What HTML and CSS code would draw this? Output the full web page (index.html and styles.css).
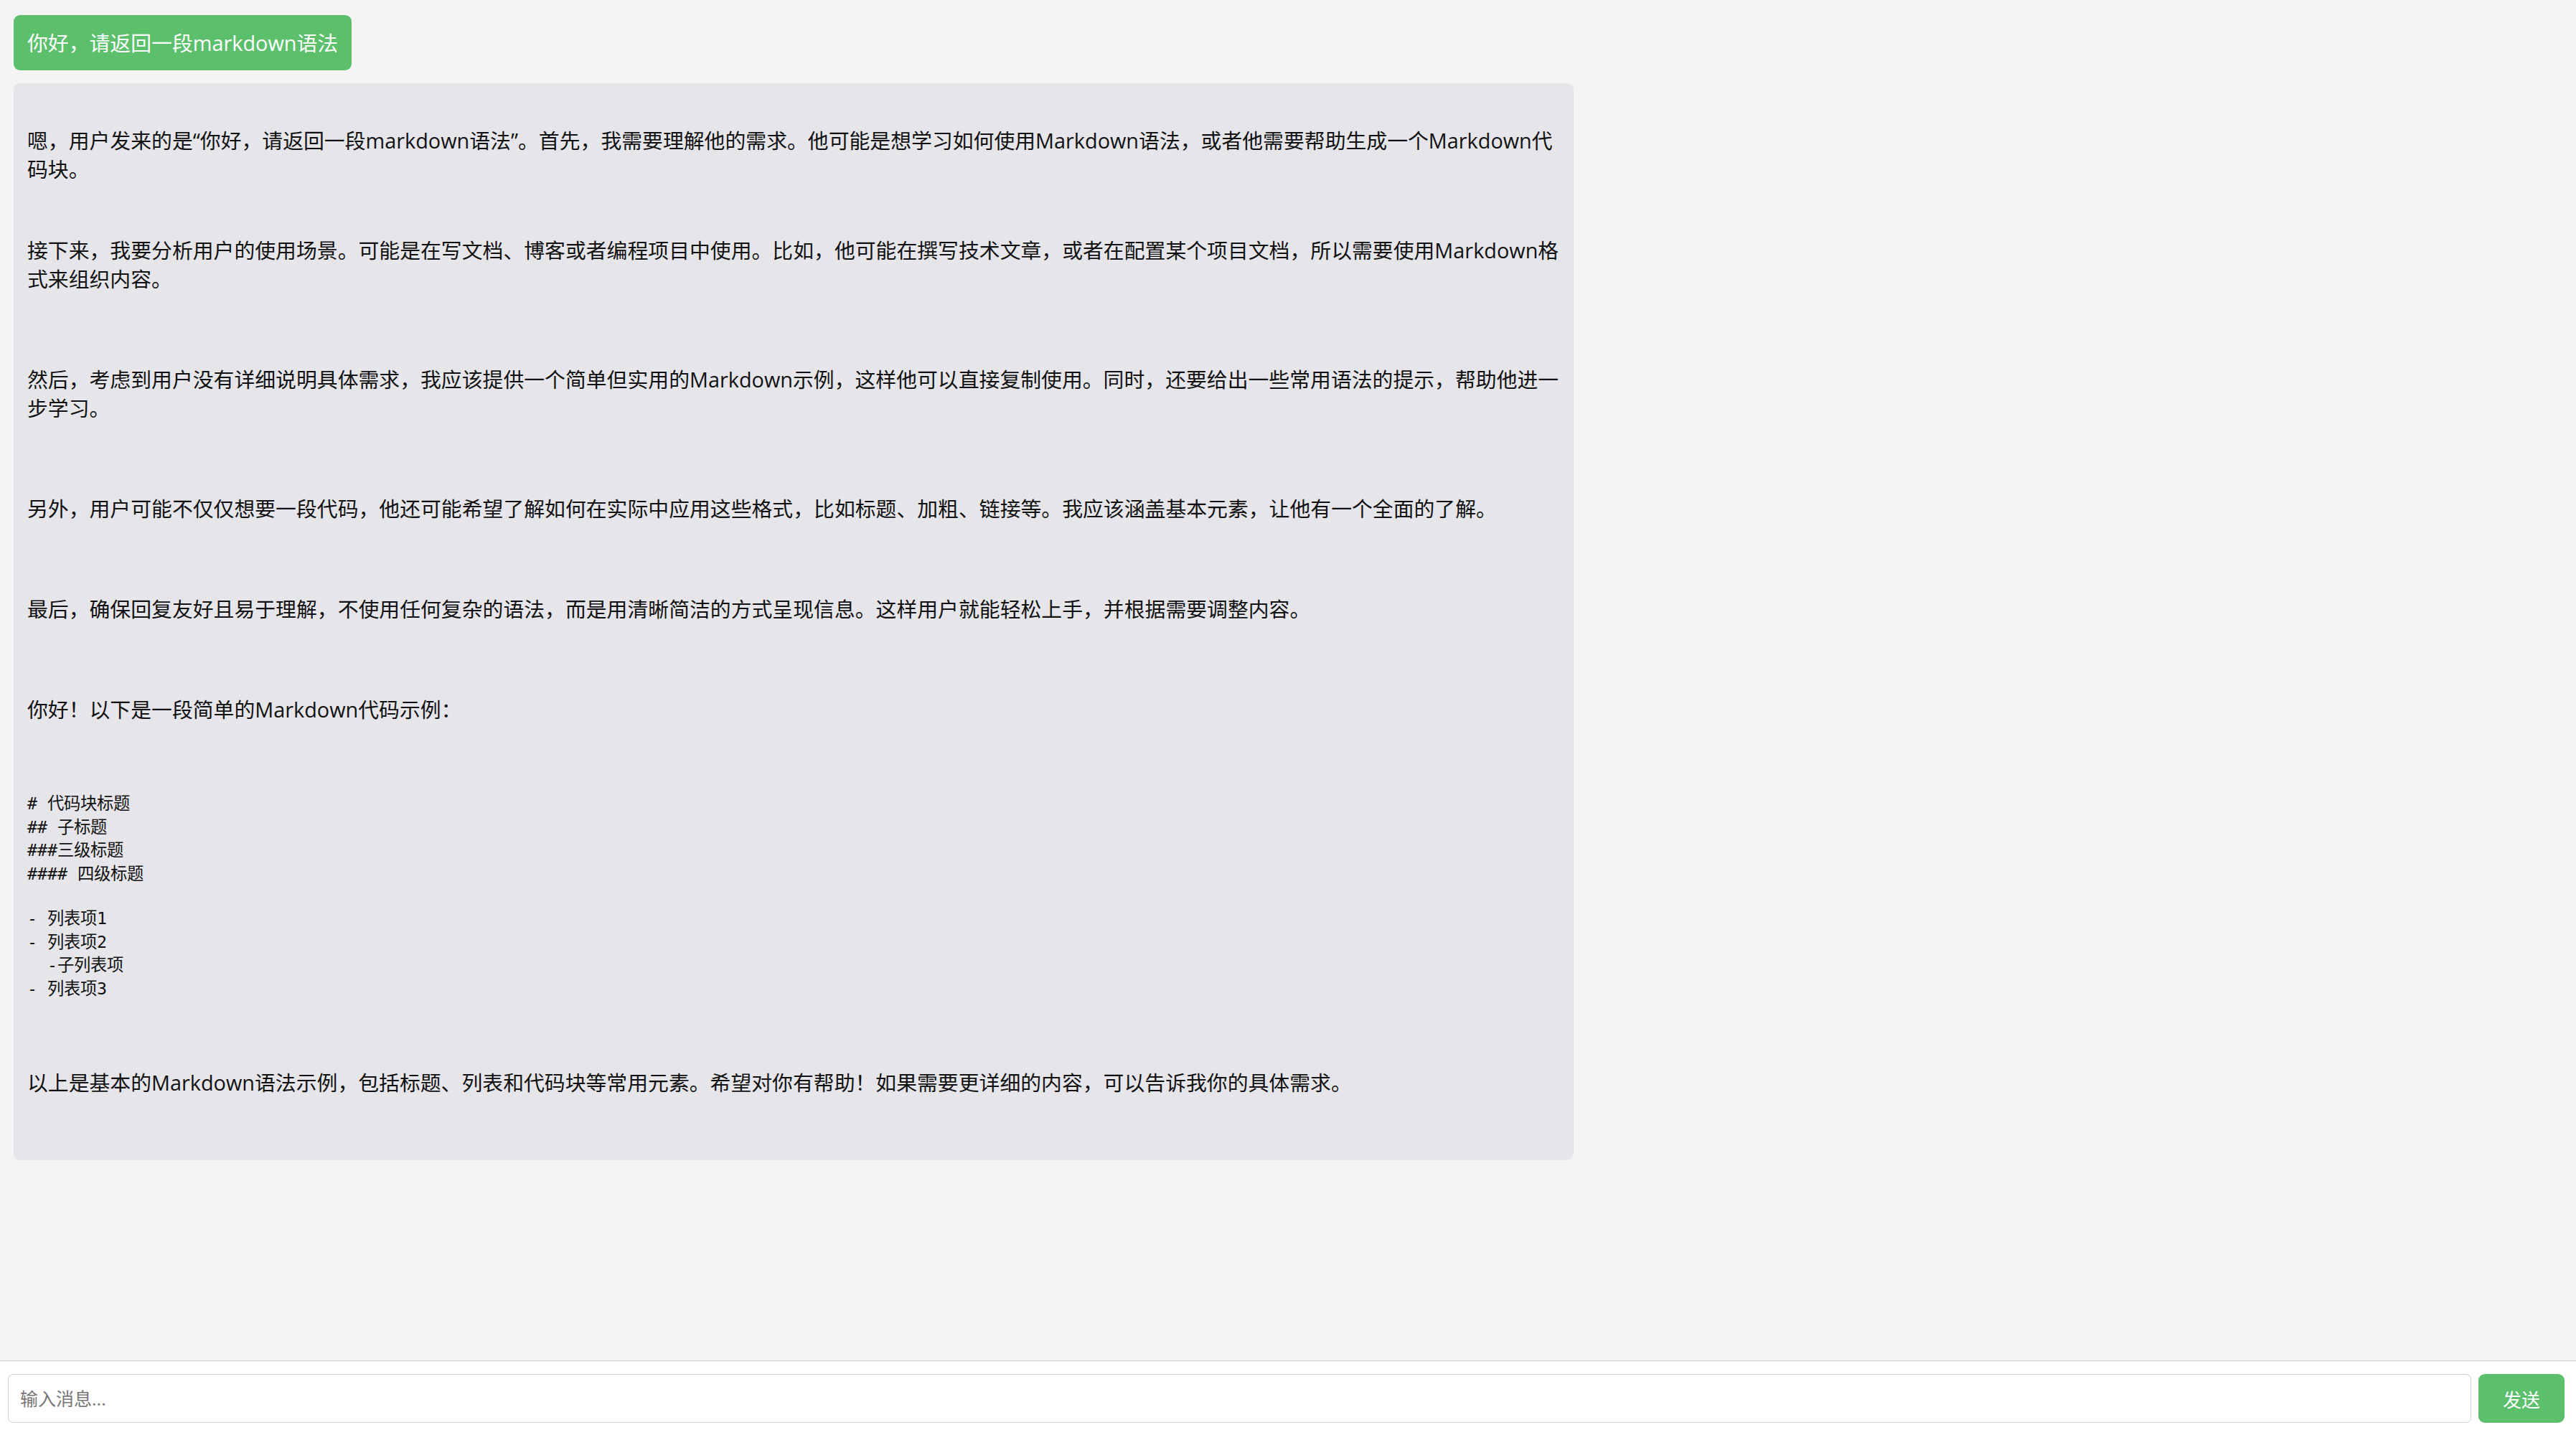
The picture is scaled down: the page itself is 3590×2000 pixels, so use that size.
FILE: index.html
```html
<!DOCTYPE html>
<html lang="zh-CN">
<head>
<meta charset="utf-8">
<title>Chat</title>
<link rel="stylesheet" href="styles.css">
</head>
<body>
<div class="app">
  <main class="messages">
    <div class="msg msg-user">你好，请返回一段markdown语法</div>
    <div class="msg msg-bot">
      <p class="first">嗯，用户发来的是“你好，请返回一段markdown语法”。首先，我需要理解他的需求。他可能是想学习如何使用Markdown语法，或者他需要帮助生成一个Markdown代码块。</p>
      <p class="near">接下来，我要分析用户的使用场景。可能是在写文档、博客或者编程项目中使用。比如，他可能在撰写技术文章，或者在配置某个项目文档，所以需要使用Markdown格式来组织内容。</p>
      <p>然后，考虑到用户没有详细说明具体需求，我应该提供一个简单但实用的Markdown示例，这样他可以直接复制使用。同时，还要给出一些常用语法的提示，帮助他进一步学习。</p>
      <p>另外，用户可能不仅仅想要一段代码，他还可能希望了解如何在实际中应用这些格式，比如标题、加粗、链接等。我应该涵盖基本元素，让他有一个全面的了解。</p>
      <p>最后，确保回复友好且易于理解，不使用任何复杂的语法，而是用清晰简洁的方式呈现信息。这样用户就能轻松上手，并根据需要调整内容。</p>
      <p>你好！以下是一段简单的Markdown代码示例：</p>
      <pre class="code"><code># 代码块标题
## 子标题
###三级标题
#### 四级标题</code></pre>
      <pre class="code code-list"><code>- 列表项1
- 列表项2
  -子列表项
- 列表项3</code></pre>
      <p class="last">以上是基本的Markdown语法示例，包括标题、列表和代码块等常用元素。希望对你有帮助！如果需要更详细的内容，可以告诉我你的具体需求。</p>
    </div>
  </main>
  <footer class="composer">
    <input class="composer-input" type="text" placeholder="输入消息...">
    <button class="composer-send" type="button">发送</button>
  </footer>
</div>
</body>
</html>
```

FILE: styles.css
```css
* {
  box-sizing: border-box;
}

html, body {
  margin: 0;
  padding: 0;
  height: 100%;
}

body {
  background: #f4f4f4;
  color: #111;
  font-family: "Open Sans", "Noto Sans CJK SC", sans-serif;
  font-size: 28.85px;
  line-height: 40px;
}

.app {
  display: flex;
  flex-direction: column;
  height: 100vh;
}

.messages {
  flex: 1;
  overflow: hidden;
  display: flex;
  flex-direction: column;
  align-items: flex-start;
  gap: 18px;
  padding: 21px 19px;
}

.msg {
  border-radius: 9px;
}

.msg-user {
  background: #5bbf6c;
  color: #fff;
  padding: 18px 19px;
  line-height: 41px;
}

.msg-bot {
  width: 2174px;
  background: #e5e5ea;
  padding: 20px 10px 20px 19px;
}

.msg-bot p {
  margin: 100px 0 0;
}

.msg-bot p.first {
  margin-top: 40px;
}

.msg-bot p.near {
  margin-top: 73px;
}

.msg-bot p.last {
  margin-top: 94px;
  margin-bottom: 68px;
}

.code {
  margin: 95px 0 0;
  font-family: "DejaVu Sans Mono", "Noto Sans CJK SC", monospace;
  font-size: 23.3px;
  line-height: 32.7px;
  white-space: pre;
}

.code-list {
  margin-top: 29px;
}

.composer {
  display: flex;
  gap: 10px;
  background: #fff;
  border-top: 1px solid #cfcfcf;
  padding: 18px 16px 17px 11px;
}

.composer-input {
  flex: 1;
  height: 68px;
  border: 1px solid #cfcfcf;
  border-radius: 7px;
  padding: 0 16px;
  font-family: "Open Sans", "Noto Sans CJK SC", sans-serif;
  font-size: 25px;
  color: #111;
  background: #fff;
  outline: none;
}

.composer-input::placeholder {
  color: #777;
}

.composer-send {
  width: 120px;
  height: 68px;
  border: none;
  border-radius: 9px;
  background: #5bbf6c;
  color: #fff;
  font-family: "Noto Sans CJK SC", sans-serif;
  font-size: 26px;
  cursor: pointer;
}
```
